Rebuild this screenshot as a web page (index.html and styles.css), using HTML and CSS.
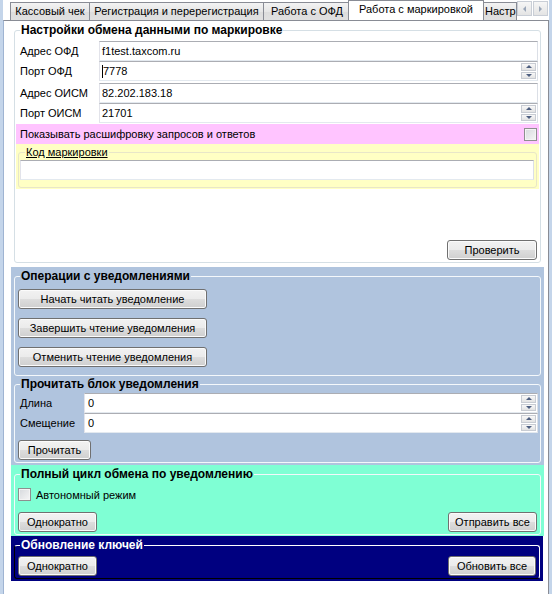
FILE: index.html
```html
<!DOCTYPE html>
<html lang="ru">
<head>
  <meta charset="UTF-8">
  <title>Работа с маркировкой</title>
  <link rel="stylesheet" href="styles.css">
</head>
<body>

<div class="tab-control">
  <div class="tab-strip">
    <span class="tab tab-check">Кассовый чек</span>
    <span class="tab tab-reg">Регистрация и перерегистрация</span>
    <span class="tab tab-ofd">Работа с ОФД</span>
    <span class="tab tab-mark active">Работа с маркировкой</span>
    <span class="tab tab-setup">Настр</span>
    <span class="tab-scroll">
      <span class="scroll-btn left"></span>
      <span class="scroll-btn right"></span>
    </span>
  </div>

  <div class="tab-page">

    <!-- connection settings -->
    <div class="group group-main">
      <fieldset class="frame">
        <legend>Настройки обмена данными по маркировке</legend>

        <div class="field-pair">
          <label>Адрес ОФД</label>
          <div class="textbox"><span class="value">f1test.taxcom.ru</span></div>
          <label>Порт ОФД</label>
          <div class="textbox numeric">
            <span class="value"><span class="caret"></span>7778</span>
            <span class="spin"><span class="spin-btn up"></span><span class="spin-btn down"></span></span>
          </div>
        </div>

        <div class="field-pair">
          <label>Адрес ОИСМ</label>
          <div class="textbox"><span class="value">82.202.183.18</span></div>
          <label>Порт ОИСМ</label>
          <div class="textbox numeric">
            <span class="value">21701</span>
            <span class="spin"><span class="spin-btn up"></span><span class="spin-btn down"></span></span>
          </div>
        </div>

        <div class="debug-row">
          <span>Показывать расшифровку запросов и ответов</span>
          <span class="checkbox"></span>
        </div>

        <div class="code-panel">
          <fieldset class="frame code-frame">
            <legend>Код маркировки</legend>
            <div class="textbox code-box"></div>
          </fieldset>
        </div>

        <div class="actions actions-check">
          <button class="btn btn-check">Проверить</button>
        </div>
      </fieldset>
    </div>

    <!-- notification operations -->
    <div class="group group-blue group-ops">
      <fieldset class="frame">
        <legend>Операции с уведомлениями</legend>
        <div class="op-list">
          <button class="btn btn-op">Начать читать уведомление</button>
          <button class="btn btn-op">Завершить чтение уведомления</button>
          <button class="btn btn-op">Отменить чтение уведомления</button>
        </div>
      </fieldset>
    </div>

    <div class="group group-blue group-read">
      <fieldset class="frame">
        <legend>Прочитать блок уведомления</legend>
        <div class="field-pair block-fields">
          <label>Длина</label>
          <div class="textbox numeric">
            <span class="value">0</span>
            <span class="spin"><span class="spin-btn up"></span><span class="spin-btn down"></span></span>
          </div>
          <label>Смещение</label>
          <div class="textbox numeric">
            <span class="value">0</span>
            <span class="spin"><span class="spin-btn up"></span><span class="spin-btn down"></span></span>
          </div>
        </div>
        <div class="actions">
          <button class="btn btn-read">Прочитать</button>
        </div>
      </fieldset>
    </div>

    <div class="group group-aqua">
      <fieldset class="frame">
        <legend>Полный цикл обмена по уведомлению</legend>
        <div class="check-line">
          <span class="checkbox"></span>
          <span>Автономный режим</span>
        </div>
        <div class="actions split">
          <button class="btn btn-once">Однократно</button>
          <button class="btn btn-send">Отправить все</button>
        </div>
      </fieldset>
    </div>

    <!-- keys -->
    <div class="group group-navy">
      <fieldset class="frame">
        <legend>Обновление ключей</legend>
        <div class="actions split">
          <button class="btn btn-once">Однократно</button>
          <button class="btn btn-update">Обновить все</button>
        </div>
      </fieldset>
    </div>

  </div>
</div>

</body>
</html>
```

FILE: styles.css
```css
* { margin: 0; padding: 0; box-sizing: border-box; }

body {
  width: 552px;
  height: 594px;
  overflow: hidden;
  background: #c4d5ea;
  font-family: "Liberation Sans", Arial, sans-serif;
  font-size: 11px;
  color: #000;
}

.tab-control {
  margin-left: 3px;
  width: 546px;
  height: 594px;
  background: #fff;
}

/* tab headers */
.tab-strip {
  height: 20px;
  display: flex;
  align-items: flex-end;
  padding-left: 7px;
  overflow: hidden;
}

.tab {
  flex-shrink: 0;
  height: 18px;
  line-height: 17px;
  margin-left: -1px;
  border: 1px solid #898c95;
  border-bottom: none;
  background: linear-gradient(#f3f3f3, #e6e6e6 50%, #dcdcdc 51%, #e0e0e0);
  text-align: center;
  white-space: nowrap;
  overflow: hidden;
}

.tab-check { width: 80px; margin-left: 0; }
.tab-reg { width: 175px; }
.tab-ofd { width: 88px; }

.tab.active {
  position: relative;
  z-index: 1;
  width: 136px;
  height: 21px;
  line-height: 17px;
  margin: 0 -2px -1px -3px;
  background: #fff;
}

.tab-setup {
  width: 36px;
  text-align: left;
  padding-left: 3px;
}

.tab-scroll {
  display: flex;
  gap: 1px;
  align-self: flex-start;
  margin-top: 1px;
  flex-shrink: 0;
}

.scroll-btn {
  width: 15px;
  height: 15px;
  border: 1px solid #c9ced6;
  background: linear-gradient(#f6f6f6, #e4e4e4);
  display: flex;
  align-items: center;
  justify-content: center;
}

.scroll-btn::before {
  content: "";
  border-top: 3px solid transparent;
  border-bottom: 3px solid transparent;
}

.scroll-btn.left::before { border-right: 3px solid #9aa6b8; }
.scroll-btn.right::before { border-left: 3px solid #9aa6b8; }

/* page */
.tab-page {
  height: 574px;
  border: 1px solid #898c95;
  border-left-color: #9fb4d2;
  border-bottom: none;
  padding: 0 4px 0 7px;
}

.group {
  padding: 2px 3px 1px 3px;
}

.frame {
  min-width: 0;
  border: 1px solid #d5dfe5;
  border-radius: 3px;
  padding: 0 1px 1px 1px;
}

.frame legend {
  margin-left: 4px;
  padding: 0 1px;
  line-height: 14px;
  font-size: 12px;
  font-weight: bold;
}

/* labelled text boxes */
.field-pair {
  display: grid;
  grid-template-columns: 79px 1fr;
  grid-auto-rows: 20px;
  align-items: center;
  padding: 0 1px 0 4px;
  margin-top: 2px;
}

.group-main .field-pair:first-of-type { margin-top: 4px; }

.textbox {
  height: 20px;
  display: flex;
  align-items: center;
  background: #fff;
  border: 1px solid;
  border-color: #abadb3 #dbdfe6 #e3e9ef #e2e3ea;
}

.textbox .value {
  flex: 1;
  padding-left: 2px;
  display: flex;
  align-items: center;
}

.caret {
  width: 1px;
  height: 13px;
  background: #000;
}

.spin {
  width: 15px;
  height: 16px;
  margin-right: 1px;
  display: flex;
  flex-direction: column;
  gap: 1px;
}

.spin-btn {
  flex: 1;
  border: 1px solid #c8ccd3;
  background: linear-gradient(#f8f8f8, #e3e3e3);
  display: flex;
  align-items: center;
  justify-content: center;
}

.spin-btn::before {
  content: "";
  border-left: 3px solid transparent;
  border-right: 3px solid transparent;
}

.spin-btn.up::before { border-bottom: 3px solid #4e5f80; }
.spin-btn.down::before { border-top: 3px solid #4e5f80; }

.checkbox {
  width: 13px;
  height: 13px;
  border: 1px solid #8e8f8f;
  background: linear-gradient(135deg, #d6d9dd, #f6f6f6);
  box-shadow: inset 0 0 0 1px #f4f4f4;
}

.debug-row {
  height: 20px;
  margin-top: 1px;
  padding: 0 2px 0 4px;
  background: #ffc4ff;
  display: flex;
  align-items: center;
  justify-content: space-between;
}

.code-panel {
  height: 45px;
  padding: 2px 2px 1px 2px;
  background: #ffffc4;
}

.code-frame {
  border-color: #e8e6c8;
  padding: 0 2px 7px 1px;
}

.code-frame legend {
  margin-left: 5px;
  line-height: 12px;
  font-size: 11px;
  font-weight: normal;
  text-decoration: underline;
}

.code-box {
  margin-top: 2px;
}

/* buttons */
.btn {
  height: 20px;
  font: inherit;
  color: #000;
  border: 1px solid #707070;
  border-radius: 3px;
  background: linear-gradient(#f2f2f2, #ebebeb 50%, #dddddd 51%, #cfcfcf);
  box-shadow: inset 0 0 0 1px #fbfbfb;
}

.actions {
  display: flex;
  padding: 0 2px 1px 2px;
}

.actions.split { justify-content: space-between; }

.actions-check {
  justify-content: flex-end;
  margin-top: 51px;
}

.btn-check { width: 90px; }

.group-main { padding-bottom: 4px; }

.group-blue { background: #b0c4de; }
.group-aqua { background: #7fffd4; }
.group-navy { background: #000080; }

.group-blue .frame,
.group-aqua .frame {
  border-color: #f4f8fb;
}

.group-navy .frame {
  border-color: #fff #fff #000 #000;
}

.group-navy legend { color: #fff; }

.op-list {
  display: flex;
  flex-direction: column;
  align-items: flex-start;
  gap: 9px;
  padding: 6px 2px 7px 2px;
}

.btn-op { width: 189px; }

.group-ops { padding-bottom: 0; }
.group-read { padding-top: 1px; padding-bottom: 2px; }

.block-fields {
  grid-template-columns: 64px 1fr;
}

.block-fields .value { padding-left: 3px; }

.group-read .actions { margin-top: 7px; }
.btn-read { width: 73px; }

.check-line {
  display: flex;
  align-items: center;
  gap: 5px;
  padding-left: 2px;
  margin-top: 7px;
}

.group-aqua .actions { margin-top: 11px; }

.btn-once { width: 79px; }
.btn-send { width: 89px; }
.btn-update { width: 88px; }

.group-navy { padding-bottom: 2px; margin-right: 1px; }
.group-navy .actions { margin-top: 4px; }
```
